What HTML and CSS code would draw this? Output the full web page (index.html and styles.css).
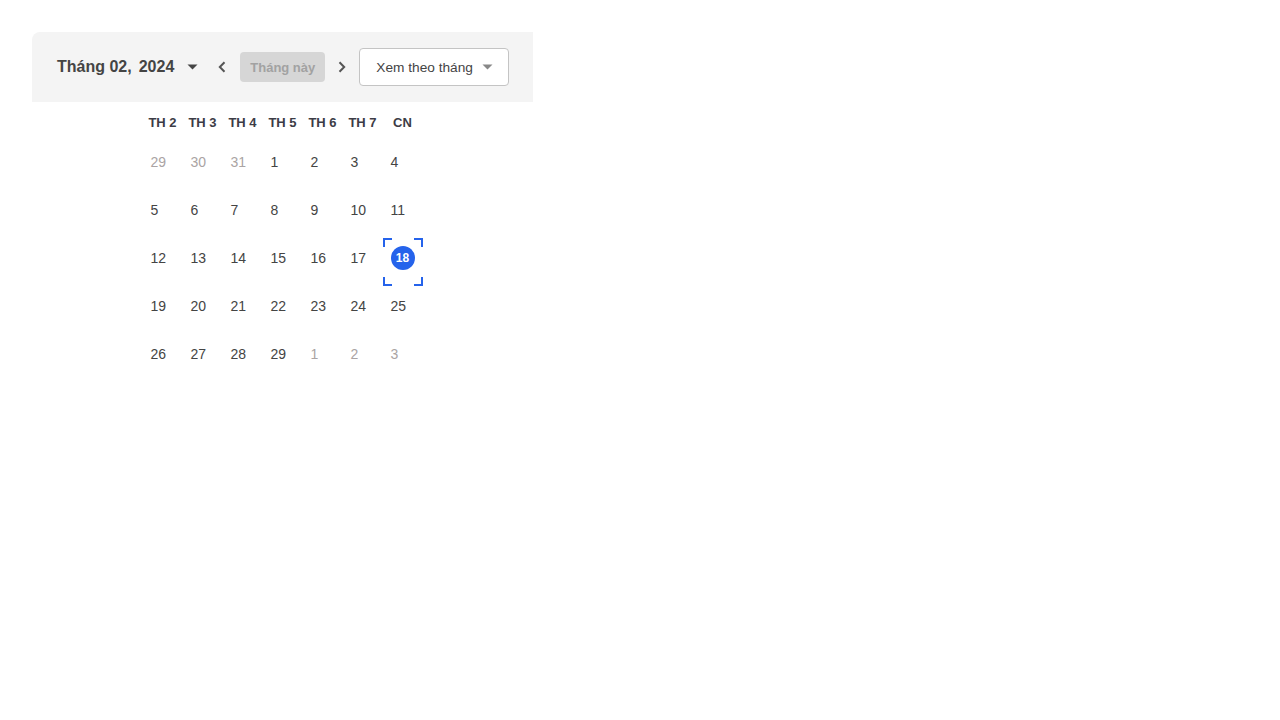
FILE: index.html
```html
<!DOCTYPE html>
<html lang="vi">
<head>
<meta charset="utf-8">
<title>Lịch</title>
<link rel="stylesheet" href="styles.css">
</head>
<body>
<div class="calendar">
  <div class="toolbar">
    <div class="title"><span class="month">Tháng 02,</span><span class="year">2024</span></div>
    <svg class="caret" width="11" height="6" viewBox="0 0 11 6"><path d="M0.5 0.5H10.5L5.5 5.5Z" fill="#444"/></svg>
    <svg class="chev prev" width="10" height="12" viewBox="0 0 10 12"><path d="M7.5 1.2L2.8 6L7.5 10.8" fill="none" stroke="#555" stroke-width="2"/></svg>
    <button class="today">Tháng này</button>
    <svg class="chev next" width="10" height="12" viewBox="0 0 10 12"><path d="M2.5 1.2L7.2 6L2.5 10.8" fill="none" stroke="#555" stroke-width="2"/></svg>
    <div class="select"><span>Xem theo tháng</span><svg width="11" height="6" viewBox="0 0 11 6"><path d="M0.5 0.5H10.5L5.5 5.5Z" fill="#888"/></svg></div>
  </div>
  <div class="grid-wrap">
    <div class="grid">
      <div class="wd">TH 2</div><div class="wd">TH 3</div><div class="wd">TH 4</div><div class="wd">TH 5</div><div class="wd">TH 6</div><div class="wd">TH 7</div><div class="wd">CN</div>

      <div class="day muted"><span>29</span></div><div class="day muted"><span>30</span></div><div class="day muted"><span>31</span></div><div class="day"><span>1</span></div><div class="day"><span>2</span></div><div class="day"><span>3</span></div><div class="day"><span>4</span></div>

      <div class="day"><span>5</span></div><div class="day"><span>6</span></div><div class="day"><span>7</span></div><div class="day"><span>8</span></div><div class="day"><span>9</span></div><div class="day"><span>10</span></div><div class="day"><span>11</span></div>

      <div class="day"><span>12</span></div><div class="day"><span>13</span></div><div class="day"><span>14</span></div><div class="day"><span>15</span></div><div class="day"><span>16</span></div><div class="day"><span>17</span></div>
      <div class="day selected"><span class="circle">18</span><svg class="bracket" width="40" height="48" viewBox="0 0 40 48"><path d="M1 9V1H9M31 1H39V9M39 39V47H31M9 47H1V39" fill="none" stroke="#2563eb" stroke-width="2"/></svg></div>

      <div class="day"><span>19</span></div><div class="day"><span>20</span></div><div class="day"><span>21</span></div><div class="day"><span>22</span></div><div class="day"><span>23</span></div><div class="day"><span>24</span></div><div class="day"><span>25</span></div>

      <div class="day"><span>26</span></div><div class="day"><span>27</span></div><div class="day"><span>28</span></div><div class="day"><span>29</span></div><div class="day muted"><span>1</span></div><div class="day muted"><span>2</span></div><div class="day muted"><span>3</span></div>
    </div>
  </div>
</div>
</body>
</html>
```

FILE: styles.css
```css
html, body {
  margin: 0;
  padding: 0;
  background: #fff;
}

body {
  font-family: "Liberation Sans", Arial, sans-serif;
  color: #444;
  padding: 32px;
}

.calendar {
  width: 501px;
}

.toolbar {
  height: 70px;
  background: #f4f4f4;
  border-top-left-radius: 8px;
  display: flex;
  align-items: center;
  padding-left: 25px;
  box-sizing: border-box;
}

.title {
  font-size: 16px;
  font-weight: bold;
  color: #444;
  white-space: nowrap;
}

.year {
  margin-left: 7px;
}

.caret {
  display: block;
  margin-left: 13px;
}

.chev {
  display: block;
}

.prev {
  margin-left: 19px;
}

.today {
  margin-left: 13px;
  width: 85px;
  height: 30px;
  border: none;
  border-radius: 4px;
  background: #d6d6d6;
  color: #a2a2a2;
  font-family: "Liberation Sans", Arial, sans-serif;
  font-size: 13px;
  font-weight: bold;
  padding: 0;
}

.next {
  margin-left: 12px;
}

.select {
  margin-left: 12px;
  width: 150px;
  height: 38px;
  box-sizing: border-box;
  border: 1px solid #c4c4c4;
  border-radius: 4px;
  background: #fff;
  display: flex;
  align-items: center;
  justify-content: space-between;
  padding: 0 15px 0 16px;
  font-size: 13.7px;
  color: #444;
}

.select svg {
  display: block;
}

.grid-wrap {
  display: flex;
  justify-content: center;
}

.grid {
  display: grid;
  grid-template-columns: repeat(7, 40px);
  grid-template-rows: 40px repeat(5, 48px);
}

.wd {
  display: flex;
  align-items: center;
  justify-content: center;
  font-size: 13px;
  font-weight: bold;
  color: #3c3c46;
}

.day {
  position: relative;
  padding: 8px 0 0 8px;
  box-sizing: border-box;
  font-size: 14px;
  color: #444;
}

.day span {
  display: block;
  height: 24px;
  line-height: 24px;
}

.day.muted {
  color: #aaa4a4;
}

.day .circle {
  width: 24px;
  border-radius: 50%;
  background: #2563eb;
  color: #fff;
  font-size: 12px;
  font-weight: bold;
  text-align: center;
}

.bracket {
  position: absolute;
  left: 0;
  top: 0;
}
```
